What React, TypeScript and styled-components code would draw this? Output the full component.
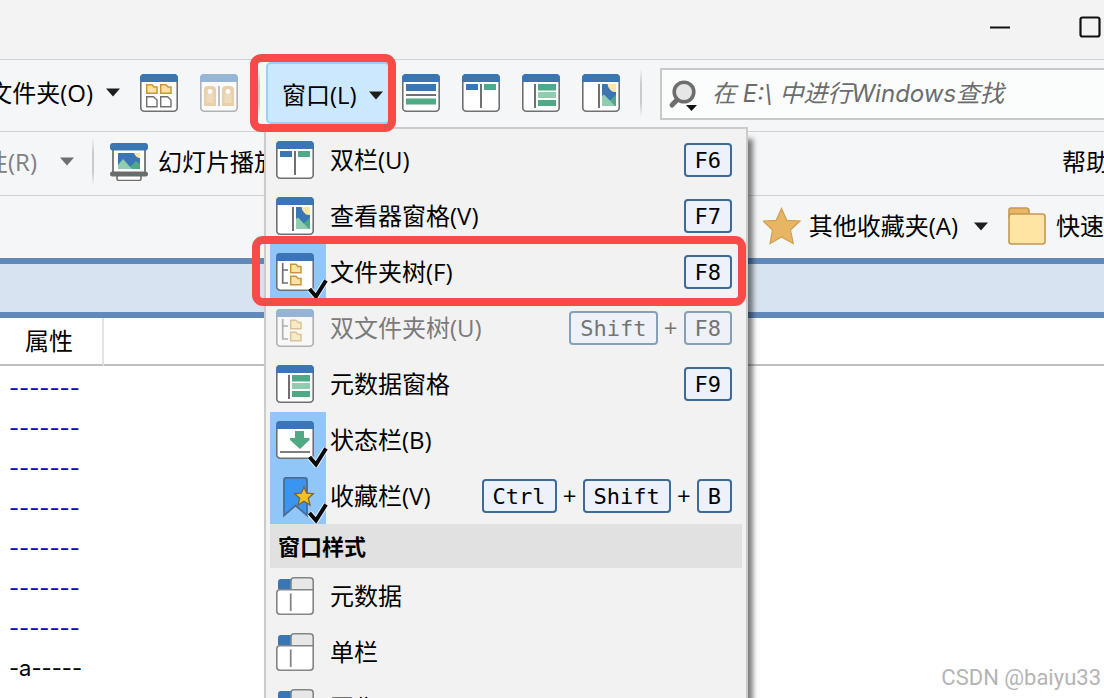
import React from "react";
import styled, { createGlobalStyle, css } from "styled-components";

const ui = `"Open Sans", "Noto Sans CJK SC", sans-serif`;
const BLUE = "#3b76b4";
const GREEN = "#4fa985";
const MINT = "#8fcdb0";
const GREY = "#707070";

const GlobalStyle = createGlobalStyle`
  * { box-sizing: border-box; }
  body { margin: 0; background: #fff; }
  button, input { font: inherit; color: inherit; }
  button { border: 0; padding: 0; background: none; }
`;

const Page = styled.div`
  position: relative;
  height: 100vh;
  overflow: hidden;
  display: flex;
  flex-direction: column;
  background: #fff;
  color: #000;
  font: 24px/36px ${ui};
  white-space: nowrap;
`;

const TitleBar = styled.header`
  flex: none;
  display: flex;
  justify-content: flex-end;
  gap: 68px;
  height: 59px;
  padding: 16px 3px 0 0;
  background: #f3f3f3;
`;

const CaptionButton = styled.button`
  width: 22px;
  height: 22px;
  svg { display: block; }
`;

const Bar = styled.div<{ $height: number; $pad?: number }>`
  flex: none;
  display: flex;
  align-items: center;
  height: ${(p) => p.$height}px;
  padding-bottom: ${(p) => p.$pad ?? 4}px;
  border-top: 1px solid #cfd1d4;
  background: #f5f6f8;
`;

const TextButton = styled.button<{ $width?: number; $gap?: number; $dim?: boolean; $end?: boolean }>`
  flex: none;
  display: flex;
  align-items: center;
  justify-content: ${(p) => (p.$end ? "flex-end" : "flex-start")};
  gap: ${(p) => p.$gap ?? 10}px;
  ${(p) => p.$width && css`width: ${p.$width}px;`}
  overflow: hidden;
  color: ${(p) => (p.$dim ? "#808080" : "#000")};
`;

const ButtonLabel = styled.span`
  padding-right: 8px;
`;

const IconButton = styled.button`
  width: 38px;
  height: 38px;
`;

const IconGroup = styled.div<{ $before?: number; $after?: number }>`
  flex: none;
  display: flex;
  gap: 22px;
  margin: 0 ${(p) => p.$after ?? 20}px 0 ${(p) => p.$before ?? 20}px;
`;

const Icon = styled.svg.attrs({ viewBox: "0 0 38 38", "aria-hidden": true })<{ $faded?: boolean }>`
  flex: none;
  display: block;
  width: 38px;
  height: 38px;
  overflow: visible;
  opacity: ${(p) => (p.$faded ? 0.5 : 1)};
`;

const CaretShape = styled.svg.attrs({ viewBox: "0 0 14 9", "aria-hidden": true })`
  flex: none;
  width: 14px;
  height: 9px;
`;

const Separator = styled.div`
  flex: none;
  width: 2px;
  height: 48px;
  background: linear-gradient(transparent, #c9cbce 30%, #c9cbce 70%, transparent);
`;

const MenuAnchor = styled.div`
  position: relative;
  z-index: 2;
  flex: none;
  margin-left: 6px;
`;

const OpenButton = styled.button`
  display: flex;
  align-items: center;
  gap: 12px;
  width: 124px;
  height: 62px;
  padding: 5px 0 0 14px;
  border: 2px solid #99d0fb;
  border-radius: 5px;
  background: #cce8ff;
`;

const Menu = styled.div`
  position: absolute;
  top: 65px;
  left: -2px;
  width: 484px;
  padding: 3px 4px;
  border: 2px solid #cbcbcb;
  background: #f2f2f2;
  box-shadow: 5px 12px 5px rgba(0, 0, 0, 0.5);
`;

const Item = styled.button<{ $dim?: boolean }>`
  position: relative;
  display: flex;
  align-items: center;
  width: 100%;
  height: 56px;
  padding-right: 10px;
  text-align: left;
  color: ${(p) => (p.$dim ? "#7a7a7a" : "#000")};
`;

const IconCell = styled.span<{ $checked?: boolean }>`
  flex: none;
  display: flex;
  align-items: center;
  width: 56px;
  height: 56px;
  margin-right: 4px;
  padding-left: 6px;
  background: ${(p) => (p.$checked ? "#91c6f8" : "transparent")};
`;

const ItemLabel = styled.span`
  flex: 1;
`;

const Keys = styled.span<{ $dim?: boolean }>`
  display: flex;
  align-items: center;
  opacity: ${(p) => (p.$dim ? 0.6 : 1)};
  color: ${(p) => (p.$dim ? "#222" : "#000")};
`;

const Key = styled.kbd`
  height: 34px;
  padding: 0 9px;
  border: 2px solid #3d6a97;
  border-radius: 4px;
  background: #ecf1fc;
  font: 22px/32px "DejaVu Sans Mono", monospace;
`;

const Plus = styled.span`
  width: 26px;
  text-align: center;
`;

const SectionTitle = styled.div`
  height: 44px;
  padding-left: 8px;
  background: #e1e1e1;
  font-size: 22px;
  font-weight: 700;
  line-height: 44px;
`;

const Marker = styled.span<{ $x: number; $right: number; $y: number; $bottom: number }>`
  position: absolute;
  z-index: 3;
  left: ${(p) => -p.$x}px;
  right: ${(p) => -p.$right}px;
  top: ${(p) => -p.$y}px;
  bottom: ${(p) => -p.$bottom}px;
  border: 8px solid #f84b48;
  border-radius: 11px;
  pointer-events: none;
`;

const SearchBox = styled.label`
  flex: 1;
  display: flex;
  align-items: center;
  gap: 6px;
  min-width: 0;
  height: 52px;
  margin: 2px 0 0 18px;
  padding-left: 6px;
  border: 2px solid #c6c8ca;
  border-right: 0;
  background: #fbfcfc;
`;

const SearchInput = styled.input`
  flex: 1;
  min-width: 0;
  padding: 0;
  border: 0;
  outline: 0;
  background: none;
  font-family: Inter, "Noto Sans CJK SC", sans-serif;
  font-style: italic;
  &::placeholder { color: #6c6c6c; opacity: 1; }
`;

const Favourites = styled.div`
  display: flex;
  align-items: center;
  gap: 20px;
  margin-left: auto;
`;

const PaneBand = styled.div`
  flex: none;
  height: 60px;
  border: solid #6089ba;
  border-width: 6px 0;
  background: #d7e3f0;
`;

const FileTable = styled.table`
  width: 100%;
  border-collapse: separate;
  border-spacing: 0;
  table-layout: fixed;
`;

const HeadCell = styled.th<{ $width?: number }>`
  height: 48px;
  padding: 0 0 0 25px;
  ${(p) => p.$width && css`width: ${p.$width}px; border-right: 2px solid #e3e3e3;`}
  border-bottom: 2px solid #c0c0c0;
  text-align: left;
  font-weight: 400;
`;

const AttrCell = styled.td<{ $dark?: boolean }>`
  height: 40px;
  padding: 4px 0 0 9px;
  font: 22px/36px Inter, sans-serif;
  color: ${(p) => (p.$dark ? "#000" : "#0a0ab4")};
`;

const Watermark = styled.div`
  position: absolute;
  right: 3px;
  bottom: 4px;
  color: #b4b4b4;
  font: 22px/32px Roboto, sans-serif;
`;

const Caret = ({ color = "#1e1e1e" }: { color?: string }) => (
  <CaretShape>
    <path d="M0 0.500H14L7 8.500Z" fill={color} />
  </CaretShape>
);

const Frame = ({ children, faded }: { children?: React.ReactNode; faded?: boolean }) => (
  <Icon $faded={faded}>
    <rect x="0.8" y="0.8" width="36.4" height="36.4" rx="3.5" fill="#fff" stroke={GREY} strokeWidth="1.6" />
    <path d="M0 8V4Q0 0 4 0H34Q38 0 38 4V8Z" fill={BLUE} />
    {children}
  </Icon>
);

const FolderShape = ({ x, y }: { x: number; y: number }) => (
  <path
    transform={`translate(${x} ${y})`}
    d="M0.7 0.7H6L8 3H11V9.3H0.7Z"
    fill="#fde3a0"
    stroke="#c8963e"
    strokeWidth="1.5"
  />
);

const DocShape = ({ x, y }: { x: number; y: number }) => (
  <path transform={`translate(${x} ${y})`} d="M0.7 0.7H7.5L11 4V10.7H0.7Z" fill="#fff" stroke={GREY} strokeWidth="1.4" />
);

const GridIcon = () => (
  <Frame>
    <FolderShape x={6} y={10} />
    <FolderShape x={20} y={10} />
    <DocShape x={6} y={22} />
    <DocShape x={20} y={22} />
  </Frame>
);

const DoorsIcon = () => (
  <Frame faded>
    <path d="M4 32V16Q4 12 8 12H12Q16 12 16 16V32ZM22 32V16Q22 12 26 12H30Q34 12 34 16V32Z" fill="#deac5e" />
    <rect x="6.500" y="20" width="7" height="9" fill="#e9c183" />
    <rect x="24.500" y="20" width="7" height="9" fill="#e9c183" />
    <circle cx="10" cy="17.500" r="2.500" fill="#fff" />
    <circle cx="28" cy="17.500" r="2.500" fill="#fff" />
    <path d="M19 12V32" stroke={GREY} strokeWidth="1.6" />
  </Frame>
);

const RowsIcon = () => (
  <Frame>
    <rect x="4" y="10" width="30" height="7" fill={BLUE} />
    <path d="M4 21H34" stroke={GREY} strokeWidth="2" />
    <rect x="4" y="24.500" width="30" height="6" fill={GREEN} />
  </Frame>
);

const DualIcon = () => (
  <Frame>
    <rect x="4" y="10" width="12" height="6" fill={BLUE} />
    <rect x="22" y="10" width="12" height="6" fill={GREEN} />
    <path d="M19 10V34" stroke={GREY} strokeWidth="2" />
  </Frame>
);

const MetaIcon = () => (
  <Frame>
    <path d="M13 10V34" stroke={GREY} strokeWidth="2" />
    <rect x="16" y="10" width="18" height="6.500" fill={GREEN} />
    <rect x="16" y="18" width="18" height="6" fill={MINT} />
    <rect x="16" y="26" width="18" height="6" fill={GREEN} />
  </Frame>
);

const ViewerIcon = () => (
  <Frame>
    <path d="M17 10V34" stroke={GREY} strokeWidth="2" />
    <rect x="20" y="10" width="14" height="22" fill={BLUE} />
    <path d="M25.500 10H34V18Q30 18.500 28 15.500Q26 14 25.500 10Z" fill="#fde6a4" />
    <path d="M26 28L34 21V32H26Z" fill={GREEN} />
    <path d="M20 22L22 20.500L33 32H20Z" fill={MINT} />
  </Frame>
);

const TreeIcon = ({ faded }: { faded?: boolean }) => (
  <Frame faded={faded}>
    <path d="M6.700 10V30H12M6.700 17H12" fill="none" stroke={GREY} strokeWidth="1.7" />
    <FolderShape x={14} y={10.5} />
    <FolderShape x={14} y={22.5} />
  </Frame>
);

const StatusIcon = () => (
  <Frame>
    <path d="M19 10H28V17H33.500V19L24 28L14 19V17H19Z" fill={GREEN} />
    <path d="M4 31H34" stroke={GREY} strokeWidth="1.8" />
  </Frame>
);

const BookmarkIcon = () => (
  <Icon>
    <path d="M10 0.800H29Q31 0.800 31 3V38.500L19.500 28.500L8 38.500V3Q8 0.800 10 0.800Z" fill="#3b94f0" stroke="#4c6c91" strokeWidth="1.8" />
    <path
      d="M28 10L30.700 16.200L37.300 16.700L32.300 21.200L34 28L28 24.300L22 28L23.700 21.200L18.700 16.700L25.300 16.200Z"
      fill="#f5c021"
      stroke="#76653a"
      strokeWidth="1.3"
    />
  </Icon>
);

const StyleIcon = () => (
  <Icon>
    <path d="M2 12V5Q2 2 5 2H15V12Z" fill={BLUE} />
    <path d="M15 12.500V4Q15 0.800 18 0.800H34Q37.200 0.800 37.200 4V13" fill="#e7e7e7" stroke="#858585" strokeWidth="1.6" />
    <path d="M4 12.800H37.200V34Q37.200 37.200 34 37.200H4Q0.800 37.200 0.800 34V16Q0.800 12.800 4 12.800Z" fill="#fff" stroke="#858585" strokeWidth="1.6" />
    <path d="M14.700 16.500V34" stroke="#858585" strokeWidth="1.8" />
  </Icon>
);

const SlideshowIcon = () => (
  <Icon>
    <rect x="3" y="5" width="32" height="25" fill="#fff" stroke={GREY} strokeWidth="1.8" />
    <rect x="0" y="0" width="38" height="7.500" rx="3" fill={BLUE} />
    <rect x="8" y="10" width="22" height="16" fill={BLUE} />
    <path d="M24 10H30V15Q26 15 24 10Z" fill="#fde6a4" />
    <path d="M18 26L26 18L30 21V26Z" fill={GREEN} />
    <path d="M8 22L13 16L22 26H8Z" fill={MINT} />
    <rect x="7" y="32" width="24" height="5.500" rx="2" fill="#fff" stroke={GREY} strokeWidth="1.6" />
    <rect x="0" y="28.500" width="38" height="5" rx="2.500" fill="#6b6b6b" />
  </Icon>
);

const StarIcon = () => (
  <Icon>
    <path d="M18.500 1.500L23.800 13.300L37 14L27.500 23L30.300 36.500L18.500 30L7 36.500L9.500 23L0 14L13.200 13.300Z" fill="#e8b564" stroke="#cf9f52" strokeWidth="1.2" />
  </Icon>
);

const FolderIcon = () => (
  <Icon>
    <path d="M1 10V3Q1 1 3 1H18Q21 1 21 4V10Z" fill="#e8b765" stroke="#c59850" strokeWidth="1.6" />
    <rect x="1" y="7" width="36" height="30" rx="2.500" fill="#fee5a4" stroke="#c59850" strokeWidth="1.6" />
  </Icon>
);

const SearchIcon = () => (
  <Icon>
    <path d="M10 24L4 30" stroke="#6d6d6d" strokeWidth="5" strokeLinecap="round" />
    <circle cx="16" cy="17" r="9.800" fill="#e6e6e6" stroke="#6d6d6d" strokeWidth="3.600" />
    <path d="M18 30H29L23.500 36Z" fill="#111" />
  </Icon>
);

const Tick = styled.svg`
  position: absolute;
  left: 37px;
  top: 32px;
  width: 22px;
  height: 24px;
`;

type Entry = { label: string; icon: React.ReactNode; keys?: string[]; checked?: boolean; dim?: boolean; marked?: boolean };

const entries: Entry[] = [
  { label: "双栏(U)", icon: <DualIcon />, keys: ["F6"] },
  { label: "查看器窗格(V)", icon: <ViewerIcon />, keys: ["F7"] },
  { label: "文件夹树(F)", icon: <TreeIcon />, keys: ["F8"], checked: true, marked: true },
  { label: "双文件夹树(U)", icon: <TreeIcon faded />, keys: ["Shift", "F8"], dim: true },
  { label: "元数据窗格", icon: <MetaIcon />, keys: ["F9"] },
  { label: "状态栏(B)", icon: <StatusIcon />, checked: true },
  { label: "收藏栏(V)", icon: <BookmarkIcon />, keys: ["Ctrl", "Shift", "B"], checked: true },
];

const styleEntries: Entry[] = ["元数据", "单栏", "图像"].map((label) => ({ label, icon: <StyleIcon /> }));

const MenuRow = ({ label, icon, keys, checked, dim, marked }: Entry) => (
  <Item role={checked ? "menuitemcheckbox" : "menuitem"} aria-checked={checked} disabled={dim} $dim={dim}>
    <IconCell $checked={checked}>{icon}</IconCell>
    {checked && (
      <Tick viewBox="0 0 22 24" aria-hidden>
        <path d="M2.500 13L9 20.500L19 4.500" fill="none" stroke="#fff" strokeOpacity="0.7" strokeWidth="6" />
        <path d="M2.500 13L9 20.500L19 4.500" fill="none" stroke="#0a0a0a" strokeWidth="4" />
      </Tick>
    )}
    <ItemLabel>{label}</ItemLabel>
    {keys && (
      <Keys $dim={dim}>
        {keys.map((k, i) => (
          <React.Fragment key={k}>
            {i > 0 && <Plus>+</Plus>}
            <Key>{k}</Key>
          </React.Fragment>
        ))}
      </Keys>
    )}
    {marked && <Marker $x={18} $right={4} $y={8} $bottom={6} />}
  </Item>
);

const attributes = ["-------", "-------", "-------", "-------", "-------", "-------", "-------", "-a-----"];

export default function App() {
  return (
    <Page>
      <GlobalStyle />
      <TitleBar>
        <CaptionButton aria-label="最小化">
          <svg width="22" height="22">
            <path d="M1 11.500H21" stroke="#111" strokeWidth="2" />
          </svg>
        </CaptionButton>
        <CaptionButton aria-label="最大化">
          <svg width="22" height="22">
            <rect x="1.500" y="1.500" width="19" height="19" rx="2" fill="none" stroke="#111" strokeWidth="2.200" />
          </svg>
        </CaptionButton>
      </TitleBar>

      <Bar $height={72} $pad={6} role="toolbar">
        <TextButton $width={120} $gap={13} $end>
          文件夹(O)
          <Caret />
        </TextButton>
        <IconGroup>
          <IconButton aria-label="图标视图"><GridIcon /></IconButton>
          <IconButton aria-label="并排比较" disabled><DoorsIcon /></IconButton>
        </IconGroup>
        <Separator />
        <MenuAnchor>
          <OpenButton aria-haspopup="menu" aria-expanded>
            窗口(L)
            <Caret />
          </OpenButton>
          <Menu role="menu">
            {entries.map((e) => <MenuRow key={e.label} {...e} />)}
            <SectionTitle>窗口样式</SectionTitle>
            {styleEntries.map((e) => <MenuRow key={e.label} {...e} />)}
          </Menu>
          <Marker $x={16} $right={6} $y={8} $bottom={8} />
        </MenuAnchor>
        <IconGroup $before={12}>
          <IconButton aria-label="水平双栏"><RowsIcon /></IconButton>
          <IconButton aria-label="双栏"><DualIcon /></IconButton>
          <IconButton aria-label="元数据窗格"><MetaIcon /></IconButton>
          <IconButton aria-label="查看器窗格"><ViewerIcon /></IconButton>
        </IconGroup>
        <Separator />
        <SearchBox>
          <SearchIcon />
          <SearchInput type="text" aria-label="查找" placeholder="在 E:\ 中进行Windows查找" />
        </SearchBox>
      </Bar>

      <Bar $height={64} role="toolbar">
        <TextButton $width={74} $gap={23} $dim $end disabled>
          性(R)
          <Caret color="#6f6f6f" />
        </TextButton>
        <IconGroup $before={18} $after={16}>
          <Separator />
        </IconGroup>
        <TextButton>
          <SlideshowIcon />
          幻灯片播放
        </TextButton>
        <Favourites>
          <TextButton $width={42}>帮助</TextButton>
        </Favourites>
      </Bar>

      <Bar $height={63} $pad={2} role="toolbar">
        <Favourites>
          <TextButton $gap={8}>
            <StarIcon />
            <ButtonLabel>其他收藏夹(A)</ButtonLabel>
            <Caret />
          </TextButton>
          <TextButton>
            <FolderIcon />
            快速
          </TextButton>
        </Favourites>
      </Bar>

      <PaneBand />

      <FileTable>
        <thead>
          <tr>
            <HeadCell $width={104} scope="col">属性</HeadCell>
            <HeadCell />
          </tr>
        </thead>
        <tbody>
          {attributes.map((a, i) => (
            <tr key={i}>
              <AttrCell $dark={a.includes("a")}>{a}</AttrCell>
              <td />
            </tr>
          ))}
        </tbody>
      </FileTable>

      <Watermark>CSDN @baiyu33</Watermark>
    </Page>
  );
}
